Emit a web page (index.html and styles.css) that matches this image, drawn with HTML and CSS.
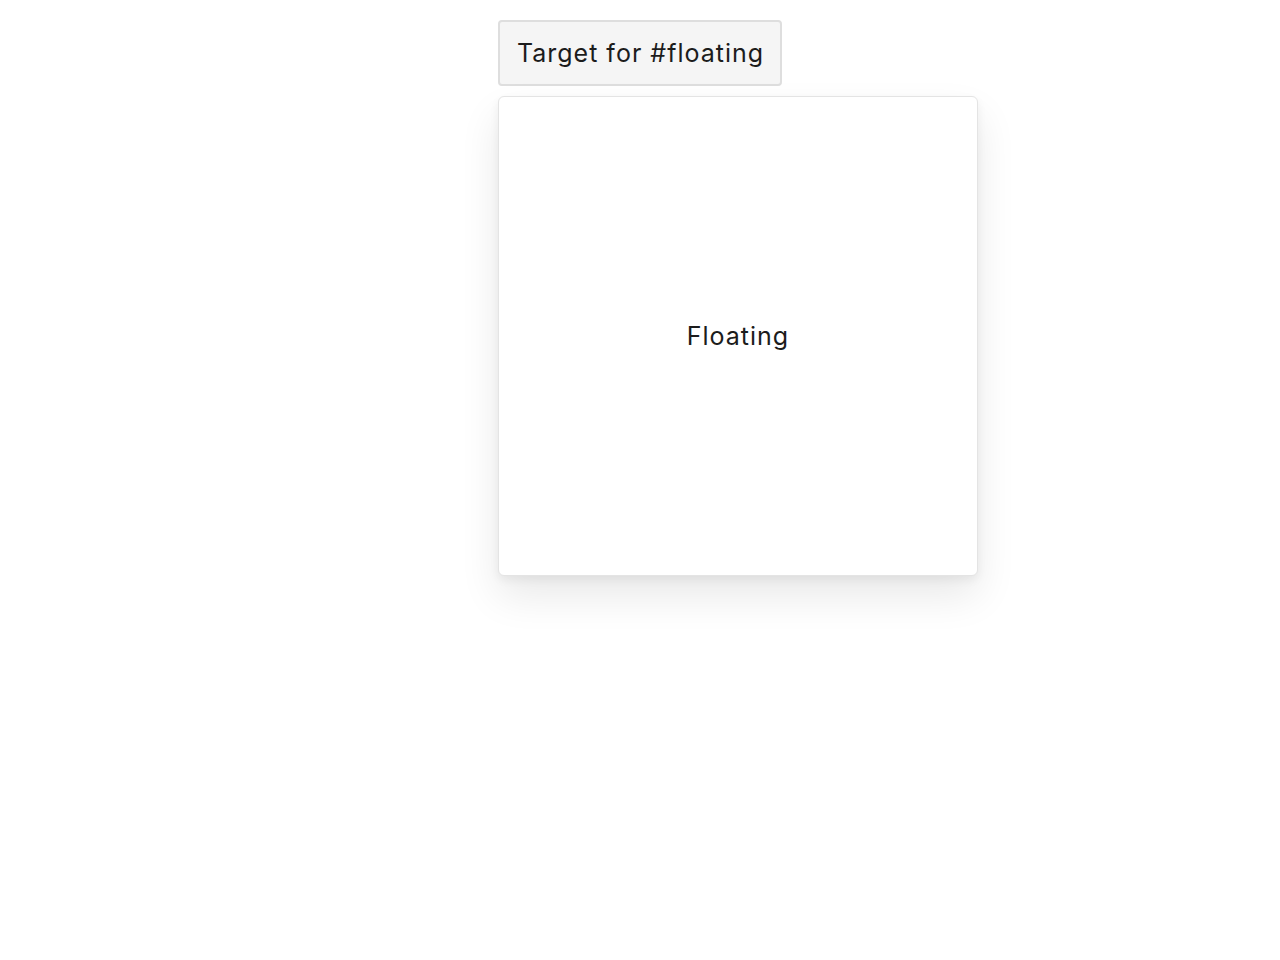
FILE: index.html
```html
<!DOCTYPE html>
<html>
<head>
<meta charset="utf-8">
<link rel="stylesheet" href="styles.css">
</head>
<body>
<div class="stage">
  <button class="target">Target for #floating</button>
  <div class="floating">Floating</div>
</div>
</body>
</html>
```
FILE: styles.css
```css
html, body {
  margin: 0;
  padding: 0;
  background: #fff;
  min-height: 100%;
}
html {
  height: 100%;
}
body {
  height: 100%;
  font-family: Inter, "Noto Sans", sans-serif;
  color: #1c1c1c;
}
.stage {
  display: grid;
  grid-template-columns: 1fr auto 1fr;
  align-content: start;
  min-height: 100%;
  box-sizing: border-box;
  padding-top: 20px;
}
.target {
  grid-column: 2;
  grid-row: 1;
  font-family: Inter, "Noto Sans", sans-serif;
  font-size: 25px;
  letter-spacing: 1px;
  line-height: 30px;
  white-space: nowrap;
  color: #1c1c1c;
  background: #f5f5f5;
  border: 2px solid #dedede;
  border-radius: 4px;
  padding: 16px 16px 16px 17px;
  margin: 0;
}
.floating {
  grid-column: 2 / 4;
  grid-row: 2;
  justify-self: start;
  margin-top: 10px;
  width: 480px;
  height: 480px;
  box-sizing: border-box;
  background: #fff;
  border: 1px solid #e4e4e4;
  border-radius: 6px;
  box-shadow: 0 20px 40px rgba(0, 0, 0, 0.09), 0 4px 10px rgba(0, 0, 0, 0.06);
  display: flex;
  align-items: center;
  justify-content: center;
  font-size: 25px;
  letter-spacing: 1px;
}
```
